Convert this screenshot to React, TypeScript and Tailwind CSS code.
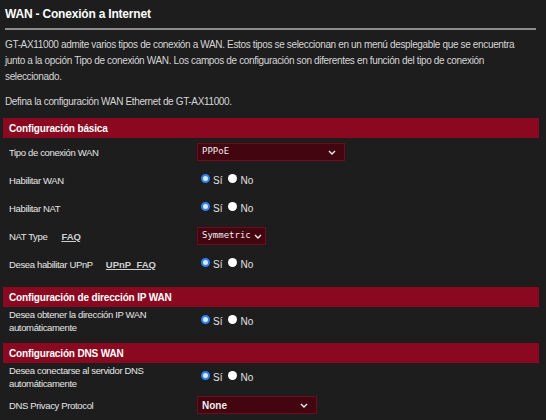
import React from 'react';

const Radio = ({ checked }: { checked?: boolean }) =>
  checked ? (
    <span className="inline-block w-[9px] h-[9px] rounded-full border-[2px] border-[#2f80f0] bg-[#d8e8ff] relative -top-[2px]" />
  ) : (
    <span className="inline-block w-[9px] h-[9px] rounded-full bg-white relative -top-[2px]" />
  );

const YesNo = () => (
  <div className="flex items-center ml-[4px] text-[10px] text-[#e0e0e0]">
    <Radio checked />
    <span className="ml-[3px] mr-[6px]">Sí</span>
    <Radio />
    <span className="ml-[3px]">No</span>
  </div>
);

const Chevron = () => (
  <svg width="8" height="5" viewBox="0 0 8 5" className="shrink-0">
    <path d="M1 1l3 3 3-3" stroke="#f0f0f0" strokeWidth="1.4" fill="none" />
  </svg>
);

const Select = ({ value, width, mono = true }: { value: string; width: string; mono?: boolean }) => (
  <div
    className={`flex items-center justify-between h-[18px] pl-[4px] bg-[#430510] border border-[#6e0b1c] text-[#eeeeee] ${width} ${mono ? "font-['DejaVu_Sans_Mono',monospace] text-[9px]" : 'text-[10px] font-bold'}`}
  >
    <span>{value}</span>
    <Chevron />
  </div>
);

const SectionBar = ({ title }: { title: string }) => (
  <div className="mx-[3px] w-[536px] h-[20px] bg-[#8a0820] flex items-center pl-[6px] text-[10px] tracking-[-0.15px] font-bold text-white">
    {title}
  </div>
);

const Row = ({ label, children, extra }: { label: React.ReactNode; children: React.ReactNode; extra?: React.ReactNode }) => (
  <div className="flex items-center h-[28px] pl-[9px]">
    <div className="w-[188px] flex items-center text-[9.5px] tracking-[-0.35px] text-[#e6e6e6] leading-[13px]">
      {label}
      {extra}
    </div>
    <div>{children}</div>
  </div>
);

export default function App() {
  return (
    <div className="w-[546px] h-[420px] overflow-hidden bg-[#1d1d1d] text-white font-['Liberation_Sans',Arial,sans-serif]">
      <div className="px-[5px] pt-[5px]">
        <h1 className="text-[12px] tracking-[-0.2px] font-bold leading-[18px] text-white">WAN - Conexión a Internet</h1>
        <div className="mt-[5px] w-[531px] h-[2px] bg-[#8c8c8c]" />
        <p className="mt-[7px] w-[520px] text-[10px] tracking-[-0.35px] leading-[16px] text-[#d6d6d6]">
          GT-AX11000 admite varios tipos de conexión a WAN. Estos tipos se seleccionan en un menú desplegable que se encuentra junto a la opción Tipo de conexión WAN. Los campos de configuración son diferentes en función del tipo de conexión seleccionado.
        </p>
        <p className="mt-[9px] text-[10px] tracking-[-0.35px] leading-[16px] text-[#d6d6d6]">
          Defina la configuración WAN Ethernet de GT-AX11000.
        </p>
      </div>

      <div className="mt-[8px]">
        <SectionBar title="Configuración básica" />
        <Row label="Tipo de conexión WAN">
          <Select value="PPPoE" width="w-[148px] pr-[8px]" />
        </Row>
        <Row label="Habilitar WAN">
          <YesNo />
        </Row>
        <Row label="Habilitar NAT">
          <YesNo />
        </Row>
        <Row label="NAT Type" extra={<span className="ml-[14px] text-[9.5px] tracking-normal underline font-bold text-[#cfcfcf]">FAQ</span>}>
          <Select value="Symmetric" width="w-[69px] pr-[3px]" />
        </Row>
        <Row label="Desea habilitar UPnP" extra={<span className="ml-[13px] text-[9.5px] tracking-normal underline font-bold text-[#cfcfcf]">UPnP&nbsp;&nbsp;FAQ</span>}>
          <YesNo />
        </Row>
      </div>

      <div className="mt-[9px]">
        <SectionBar title="Configuración de dirección IP WAN" />
        <Row label={<span>Desea obtener la dirección IP WAN<br />automáticamente</span>}>
          <YesNo />
        </Row>
      </div>

      <div className="mt-[8px]">
        <SectionBar title="Configuración DNS WAN" />
        <Row label={<span>Desea conectarse al servidor DNS<br />automáticamente</span>}>
          <YesNo />
        </Row>
        <Row label="DNS Privacy Protocol">
          <Select value="None" width="w-[120px] pr-[8px]" mono={false} />
        </Row>
      </div>
    </div>
  );
}
